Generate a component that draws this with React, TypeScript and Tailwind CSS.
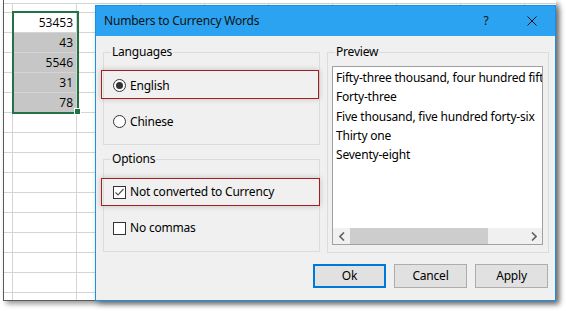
import React from 'react';

const ui = "font-['Noto_Sans',sans-serif] tracking-[-0.2px]";

const values = ['53453', '43', '5546', '31', '78'];

const Sheet = () => {
  const rows = Array.from({ length: 15 });
  const cols = Array.from({ length: 9 });
  return (
    <div className="relative ml-[3px] h-[301px] w-[553px] overflow-hidden border-b border-l border-[#5a5a5a] bg-white shadow-[3px_3px_5px_rgba(0,0,0,0.4)]">
      <div className="flex h-[4px] border-b border-[#d4d4d4]" />
      <div className="flex h-[9px] border-b border-[#d4d4d4]">
        <div className="w-[9px] shrink-0 border-r border-[#d4d4d4]" />
        {cols.map((_, c) => (
          <div key={c} className="w-[64px] shrink-0 border-r border-[#d4d4d4]" />
        ))}
      </div>
      {rows.map((_, r) => (
        <div key={r} className="flex h-[20px] border-b border-[#d4d4d4]">
          <div className="w-[9px] shrink-0 border-r border-[#d4d4d4]" />
          {cols.map((_, c) => {
            const val = c === 0 ? values[r] : undefined;
            const filled = c === 0 && r > 0 && r < 5;
            return (
              <div
                key={c}
                className={`flex w-[64px] shrink-0 items-center justify-end border-r border-[#d4d4d4] pr-[3px] font-['Open_Sans',sans-serif] text-[12px] text-black ${
                  filled ? 'bg-[#c6c6c6]' : ''
                }`}
              >
                {val}
              </div>
            );
          })}
        </div>
      ))}
      {/* selection */}
      <div className="absolute left-[8px] top-[11px] h-[103px] w-[67px] border-2 border-[#217346]" />
      <div className="absolute left-[70px] top-[108px] h-[7px] w-[7px] border border-white bg-[#217346]" />
    </div>
  );
};

const Radio = ({ checked }: { checked?: boolean }) => (
  <span className="flex h-[13px] w-[13px] shrink-0 items-center justify-center rounded-full border border-[#333] bg-white">
    {checked && <span className="h-[7px] w-[7px] rounded-full bg-[#333]" />}
  </span>
);

const Check = ({ checked }: { checked?: boolean }) => (
  <span className="flex h-[13px] w-[13px] shrink-0 items-center justify-center border border-[#333] bg-white">
    {checked && (
      <svg width="11" height="11" viewBox="0 0 11 11">
        <polyline points="1.5,5.5 4,8 9.5,2" fill="none" stroke="#555" strokeWidth="1.2" />
      </svg>
    )}
  </span>
);

const Group = ({ label, className, children }: { label: string; className: string; children: React.ReactNode }) => (
  <div className={`relative border border-[#dcdcdc] ${className}`}>
    <span className="absolute left-[7px] top-[-10px] bg-[#f0f0f0] px-[1px] text-[12px] leading-[18px] text-black">
      {label}
    </span>
    {children}
  </div>
);

const lines = [
  'Fifty-three thousand, four hundred fifty-three',
  'Forty-three',
  'Five thousand, five hundred forty-six',
  'Thirty one',
  'Seventy-eight',
];

const Btn = ({ label, primary }: { label: string; primary?: boolean }) => (
  <button
    className={`flex h-[24px] w-[73px] items-center justify-center bg-[#e1e1e1] text-[12px] text-black ${
      primary ? 'border-2 border-[#0078d7]' : 'border border-[#adadad]'
    }`}
  >
    {label}
  </button>
);

const Dialog = () => (
  <div className={`absolute left-[95px] top-[5px] flex h-[296px] w-[461px] flex-col border border-[#1a8fe3] bg-[#f0f0f0] shadow-[3px_3px_6px_rgba(0,0,0,0.35)] ${ui}`}>
    <div className="flex h-[30px] items-center bg-[#2ba3f0] pl-[8px] text-[12px] text-[#111]">
      <span className="flex-1">Numbers to Currency Words</span>
      <span className="flex w-[46px] justify-center">?</span>
      <span className="flex w-[46px] justify-center">
        <svg width="10" height="10" viewBox="0 0 10 10">
          <path d="M0.5 0.5 L9.5 9.5 M9.5 0.5 L0.5 9.5" stroke="#111" strokeWidth="1" />
        </svg>
      </span>
    </div>
    <div className="flex gap-[7px] pl-[7px] pr-[6px] pt-[16px]">
      <div className="flex w-[217px] flex-col gap-[14px]">
        <Group label="Languages" className="h-[93px] pt-[17px]">
          <div className="-ml-[3px] flex h-[29px] w-[218px] items-center gap-[4px] border border-[#a31f1f] pl-[11px] pt-[2px] text-[12px] text-black shadow-[0_0_6px_rgba(0,0,0,0.2)]">
            <Radio checked />
            <span>English</span>
          </div>
          <div className="mt-[12px] flex h-[20px] items-center gap-[4px] pl-[9px] pt-[1px] text-[12px] text-black">
            <Radio />
            <span>Chinese</span>
          </div>
        </Group>
        <Group label="Options" className="h-[93px] pt-[18px]">
          <div className="-ml-[3px] flex h-[28px] w-[219px] items-center gap-[4px] border border-[#a31f1f] pl-[11px] text-[12px] text-black shadow-[0_0_6px_rgba(0,0,0,0.2)]">
            <Check checked />
            <span>Not converted to Currency</span>
          </div>
          <div className="mt-[12px] flex h-[20px] items-center gap-[4px] pl-[9px] text-[12px] text-black">
            <Check />
            <span>No commas</span>
          </div>
        </Group>
      </div>
      <Group label="Preview" className="h-[201px] w-[222px] pl-[4px] pt-[13px]">
        <div className="flex h-[179px] w-[211px] flex-col border border-[#a0a0a0] bg-white">
          <div className="flex-1 overflow-hidden pl-[3px] pt-[1px] text-[12px] leading-[19.25px] text-black">
            {lines.map((l) => (
              <div key={l} className="whitespace-nowrap">
                {l}
              </div>
            ))}
          </div>
          <div className="flex h-[16px] items-stretch bg-[#f0f0f0]">
            <span className="flex w-[17px] items-center justify-center">
              <svg width="6" height="9" viewBox="0 0 6 9">
                <polyline points="5,0.5 1,4.5 5,8.5" fill="none" stroke="#606060" strokeWidth="1.6" />
              </svg>
            </span>
            <span className="w-[138px] bg-[#cdcdcd]" />
            <span className="flex-1" />
            <span className="flex w-[17px] items-center justify-center">
              <svg width="6" height="9" viewBox="0 0 6 9">
                <polyline points="1,0.5 5,4.5 1,8.5" fill="none" stroke="#606060" strokeWidth="1.6" />
              </svg>
            </span>
          </div>
        </div>
      </Group>
    </div>
    <div className="mt-[11px] flex justify-end gap-[8px] pr-[7px]">
      <Btn label="Ok" primary />
      <Btn label="Cancel" />
      <Btn label="Apply" />
    </div>
  </div>
);

export default function App() {
  return (
    <div className="relative h-[311px] w-[566px] overflow-hidden bg-white">
      <Sheet />
      <Dialog />
    </div>
  );
}
